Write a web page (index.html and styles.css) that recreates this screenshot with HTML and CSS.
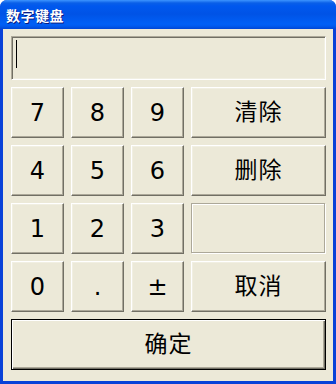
FILE: index.html
```html
<!DOCTYPE html>
<html lang="zh-CN">
<head>
<meta charset="utf-8">
<title>数字键盘</title>
<link rel="stylesheet" href="styles.css">
</head>
<body>
<div class="window">
  <div class="titlebar"><span class="title">数字键盘</span></div>
  <div class="client">
    <div class="field"><span class="caret"></span></div>
    <div class="keys">
      <button class="btn num">7</button>
      <button class="btn num">8</button>
      <button class="btn num">9</button>
      <button class="btn cjk">清除</button>
      <button class="btn num">4</button>
      <button class="btn num">5</button>
      <button class="btn num">6</button>
      <button class="btn cjk">删除</button>
      <button class="btn num">1</button>
      <button class="btn num">2</button>
      <button class="btn num">3</button>
      <div class="blank"></div>
      <button class="btn num">0</button>
      <button class="btn num">.</button>
      <button class="btn num">±</button>
      <button class="btn cjk">取消</button>
      <button class="btn cjk ok">确定</button>
    </div>
  </div>
</div>
</body>
</html>
```
FILE: styles.css
```css
html, body {
  margin: 0;
  padding: 0;
  background: #ffffff;
}
.window {
  width: 336px;
  height: 384px;
  box-sizing: border-box;
  display: flex;
  flex-direction: column;
  background: #0841d8;
  border-radius: 7px 7px 0 0;
  overflow: hidden;
}
.titlebar {
  height: 29px;
  flex: none;
  display: flex;
  align-items: center;
  padding-left: 6px;
  background: linear-gradient(180deg, #3d95ff 0px, #0a5fe8 3px, #0058ee 6px, #0053e6 14px, #0060f6 24px, #005bef 26px, #0046d5 29px);
}
.title {
  color: #ffffff;
  font-family: "Noto Sans CJK SC", sans-serif;
  font-weight: bold;
  font-size: 14px;
  letter-spacing: 0.5px;
  line-height: 16px;
  margin-top: 0;
  text-shadow: 1px 1px 0 #0a1a80;
}
.client {
  flex: 1;
  margin: 0 3px 3px 3px;
  background: #ece9d8;
  padding: 7px 7px 11px 8px;
  display: flex;
  flex-direction: column;
  gap: 7px;
}
.field {
  height: 44px;
  box-sizing: border-box;
  background: #ece9d8;
  border: 1px solid;
  border-color: #aca899 #ffffff #ffffff #aca899;
  box-shadow: inset 1px 1px 0 #716f64, inset -1px -1px 0 #f1efe2;
  padding: 3px 2px;
}
.caret {
  display: block;
  width: 1px;
  height: 28px;
  margin-left: 2px;
  background: #000000;
}
.keys {
  display: grid;
  grid-template-columns: 53px 53px 53px 135px;
  grid-auto-rows: 51px;
  gap: 7px;
}
.btn {
  margin: 0;
  padding: 0;
  background: #ece9d8;
  color: #000000;
  border: 1px solid;
  border-color: #ffffff #716f64 #716f64 #ffffff;
  box-shadow: inset -1px -1px 0 #aca899, inset 1px 1px 0 #f1efe2;
  border-radius: 0;
  cursor: default;
}
.num {
  font-family: "DejaVu Sans", sans-serif;
  font-size: 24px;
}
.cjk {
  font-family: "Noto Sans CJK SC", sans-serif;
  font-size: 23px;
  letter-spacing: 1px;
  padding-bottom: 5px;
}
.blank {
  border: 1px solid #aca899;
  box-shadow: 1px 1px 0 #ffffff, inset 1px 1px 0 #ffffff;
  box-sizing: border-box;
  height: 50px;
  width: 134px;
}
.ok {
  grid-column: 1 / -1;
  border: 1px solid #000000;
  box-shadow: inset 1px 1px 0 #ffffff, inset -1px -1px 0 #716f64, inset -2px -2px 0 #aca899;
}
```
